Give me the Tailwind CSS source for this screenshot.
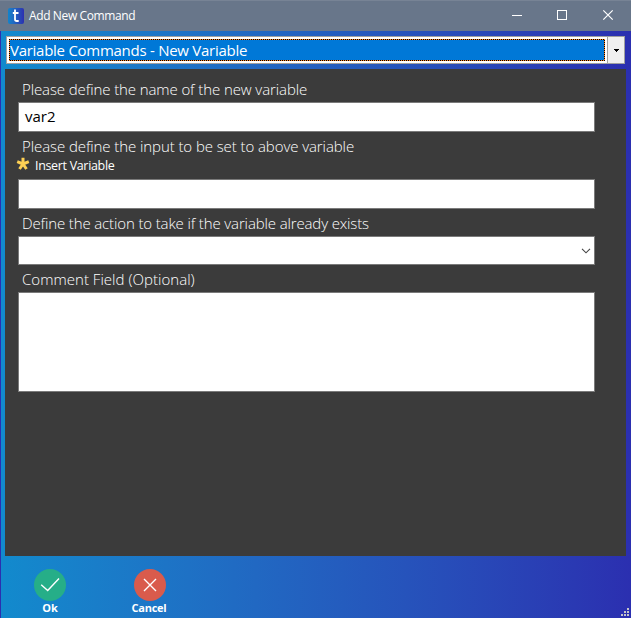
<!DOCTYPE html>
<html lang="en">
<head>
<meta charset="utf-8">
<title>Add New Command</title>
<script src="https://cdn.jsdelivr.net/npm/@tailwindcss/browser@4"></script>
</head>
<body class="w-[631px] h-[618px] overflow-hidden font-['Open_Sans','Noto_Sans',sans-serif]">
<div class="flex flex-col w-[631px] h-[618px]">
  <header class="flex items-center h-[31px] shrink-0 bg-[#68768a] border-t border-[#778395] pl-2 text-white">
    <div class="size-4 rounded-[2px] bg-linear-to-r from-[#1184cb] to-[#2b2fb0]">
      <svg class="size-4" viewBox="0 0 16 16" fill="none" stroke="#fff" stroke-width="1.8"><path d="M7 1.500v9.700q0 1.800 1.800 1.800h1.900M4.800 5h5.700"/></svg>
    </div>
    <h1 class="ml-[5px] text-[12px] leading-4 whitespace-nowrap tracking-[-0.38px]">Add New Command</h1>
    <div class="ml-auto flex">
      <svg class="w-[46px] h-[30px]" viewBox="0 0 46 30" stroke="#fff" fill="none" shape-rendering="crispEdges"><path d="M18 14.5h10"/></svg>
      <svg class="w-[45px] h-[30px]" viewBox="0 0 45 30" stroke="#fff" fill="none" shape-rendering="crispEdges"><path d="M17.500 9.500h9v9h-9z"/></svg>
      <svg class="w-[46px] h-[30px]" viewBox="0 0 46 30" stroke="#fff" stroke-width="1.2" fill="none"><path d="M18.300 9.300l9.400 9.400M27.700 9.300l-9.400 9.400"/></svg>
    </div>
  </header>
  <main class="flex flex-col flex-1 border-l border-[#2b2fb0] bg-linear-to-r from-[#128acd] to-[#2b2fb0] pt-[5px] pl-[4px] pr-[5px]">
    <div class="flex h-7 shrink-0 ml-px mr-px border border-[#a0a0a0] bg-white">
      <div class="flex-1 p-0.5">
        <div class="h-[22px] p-px bg-[repeating-conic-gradient(#ff8728_0_25%,#000_0_50%)] bg-[length:2px_2px]">
          <div class="h-5 bg-[#0078d7] text-white text-[15px] leading-5 whitespace-nowrap"><span class="tracking-[-0.27px]">Variable Commands - New Variable</span></div>
        </div>
      </div>
      <div class="w-[17px] border-l border-[#a0a0a0] bg-[#f0f0f0] flex items-center justify-center">
        <svg class="w-[5px] h-[3px]" viewBox="0 0 5 3" shape-rendering="crispEdges"><path d="M0 0h5v1H4v1H3v1H2V2H1V1H0z"/></svg>
      </div>
    </div>
    <section class="mt-[5px] h-[487px] shrink-0 bg-[#3b3b3b] pl-[13px] pr-[31px] pt-[9px] text-white text-[15px]">
      <label class="block h-6 pl-1 leading-[22px] font-light whitespace-nowrap"><span class="tracking-[-0.1px]">Please define the name of the new variable</span></label>
      <div class="h-[30px] bg-white border border-[#7a7a7a] text-black leading-[26px] pl-[6px]">var2</div>
      <label class="block h-6 mt-[3px] pl-1 leading-[22px] font-light whitespace-nowrap"><span class="tracking-[-0.085px]">Please define the input to be set to above variable</span></label>
      <div class="flex items-center h-[20px] -mt-[3px] text-[12.5px]">
        <svg class="-ml-[2px] w-[14px] h-[14px] -mt-[4px]" viewBox="0 0 14 14" stroke="#fdd054" stroke-width="3"><path d="M7 7V.8M7 7L1.200 4.700M7 7L12.800 4.700M7 7L3.500 12M7 7L10.500 12"/></svg>
        <span class="ml-[5px] -mt-px leading-4 whitespace-nowrap tracking-[-0.33px]">Insert Variable</span>
      </div>
      <div class="mt-[3px] h-[30px] bg-white border border-[#7a7a7a]"></div>
      <label class="block h-6 mt-[3px] pl-1 leading-[22px] font-light whitespace-nowrap"><span class="tracking-[-0.13px]">Define the action to take if the variable already exists</span></label>
      <div class="flex items-center justify-end h-[29px] bg-white border border-[#7a7a7a] pr-[3px]">
        <svg class="w-[10px] h-[6px]" viewBox="0 0 10 6" fill="none" stroke="#444" stroke-width="1.100"><path d="M1 .8l4 4 4-4"/></svg>
      </div>
      <label class="block h-6 mt-[3px] pl-1 leading-[22px] font-light whitespace-nowrap"><span class="tracking-[0.03px]">Comment Field (Optional)</span></label>
      <div class="h-[100px] bg-white border border-[#7a7a7a]"></div>
    </section>
    <footer class="flex flex-1 relative text-white text-[11px] font-bold leading-[14px] pt-[13px]">
      <div class="w-[90px] flex flex-col items-center">
        <svg class="size-8" viewBox="0 0 32 32" fill="none"><circle cx="16" cy="16" r="16" fill="#26ae88"/><path d="M7.200 15.800l6.500 5.700L25 9.500" stroke="#fff" stroke-width="1.400"/></svg>
        <span class="tracking-[-0.1px]">Ok</span>
      </div>
      <div class="ml-[10px] w-[90px] flex flex-col items-center">
        <svg class="size-8" viewBox="0 0 32 32" fill="none"><circle cx="16" cy="16" r="16" fill="#d95b4c"/><path d="M10 10l12 12M22 10L10 22" stroke="#fff" stroke-width="1.400"/></svg>
        <span class="-ml-[2px] tracking-[-0.25px]">Cancel</span>
      </div>
      <svg class="absolute -right-[3px] bottom-[2px] size-2" viewBox="0 0 8 8" fill="#c4c4c8" shape-rendering="crispEdges"><path d="M6 0h2v2H6zM3 3h2v2H3zM6 3h2v2H6zM0 6h2v2H0zM3 6h2v2H3zM6 6h2v2H6z"/></svg>
    </footer>
  </main>
</div>
</body>
</html>
